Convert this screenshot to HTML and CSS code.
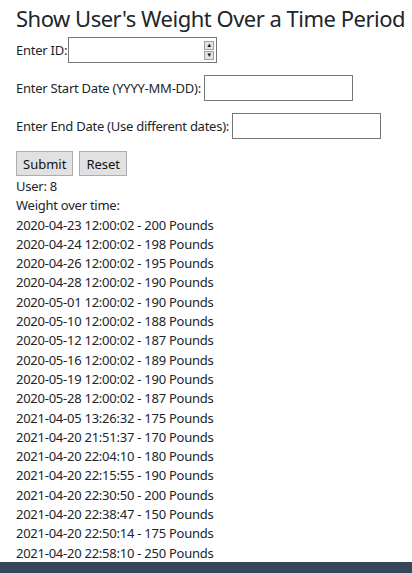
FILE: index.html
```html
<!DOCTYPE html>
<html>
<head>
<meta charset="utf-8">
<link rel="stylesheet" href="styles.css">
</head>
<body>
<div class="page">
  <h1 class="title">Show User's Weight Over a Time Period</h1>
  <form class="form">
    <div class="row row-id"><label>Enter ID:</label><span class="numwrap"><input class="field" type="text"><span class="spin"><span class="spin-btn">&#9650;</span><span class="spin-btn">&#9660;</span></span></span></div>
    <div class="row"><label>Enter Start Date (YYYY-MM-DD):</label><input class="field" type="text"></div>
    <div class="row"><label>Enter End Date (Use different dates):</label><input class="field" type="text"></div>
    <div class="buttons"><button type="button" class="btn">Submit</button><button type="button" class="btn">Reset</button></div>
  </form>
  <div class="results">
    <div>User: 8</div>
    <div>Weight over time:</div>
    <div>2020-04-23 12:00:02 - 200 Pounds</div>
    <div>2020-04-24 12:00:02 - 198 Pounds</div>
    <div>2020-04-26 12:00:02 - 195 Pounds</div>
    <div>2020-04-28 12:00:02 - 190 Pounds</div>
    <div>2020-05-01 12:00:02 - 190 Pounds</div>
    <div>2020-05-10 12:00:02 - 188 Pounds</div>
    <div>2020-05-12 12:00:02 - 187 Pounds</div>
    <div>2020-05-16 12:00:02 - 189 Pounds</div>
    <div>2020-05-19 12:00:02 - 190 Pounds</div>
    <div>2020-05-28 12:00:02 - 187 Pounds</div>
    <div>2021-04-05 13:26:32 - 175 Pounds</div>
    <div>2021-04-20 21:51:37 - 170 Pounds</div>
    <div>2021-04-20 22:04:10 - 180 Pounds</div>
    <div>2021-04-20 22:15:55 - 190 Pounds</div>
    <div>2021-04-20 22:30:50 - 200 Pounds</div>
    <div>2021-04-20 22:38:47 - 150 Pounds</div>
    <div>2021-04-20 22:50:14 - 175 Pounds</div>
    <div>2021-04-20 22:58:10 - 250 Pounds</div>
  </div>
</div>
<div class="footer"></div>
</body>
</html>
```
FILE: styles.css
```css
html, body { margin: 0; padding: 0; }
body {
  font-family: "Noto Sans", "Open Sans", sans-serif;
  font-size: 13px;
  letter-spacing: -0.25px;
  color: #212529;
  background: #fff;
  height: 573px;
  overflow: hidden;
  display: flex;
  flex-direction: column;
}
.page { padding: 0 16px; flex: 1; min-height: 0; overflow: hidden; }
.title {
  font-weight: 400;
  font-size: 22px;
  letter-spacing: -0.5px;
  line-height: 30px;
  white-space: nowrap;
  margin: 3px 0 4px;
}
.form { display: flex; flex-direction: column; }
.row { display: flex; align-items: center; gap: 3px; height: 26px; margin-bottom: 12px; }
.row-id { gap: 1px; }
.row label { line-height: 19px; }
.numwrap { position: relative; display: block; height: 26px; }
.field {
  box-sizing: border-box;
  width: 149px;
  height: 26px;
  border: 1px solid #767676;
  border-radius: 0;
  padding: 0 4px;
  font: inherit;
  background: #fff;
}
.spin {
  position: absolute;
  right: 3px;
  top: 4px;
  width: 10px;
  height: 18px;
  display: flex;
  flex-direction: column;
  gap: 1px;
}
.spin-btn {
  flex: 1;
  background: #e3e3e3;
  border: 1px solid #a0a0a0;
  box-sizing: border-box;
  font-size: 6px;
  line-height: 7px;
  text-align: center;
  color: #111;
  letter-spacing: 0;
}
.buttons { display: flex; gap: 6px; margin-top: 0; }
.btn {
  box-sizing: border-box;
  height: 25px;
  padding: 0 6px;
  background: #e1e1e1;
  border: 1px solid #adadad;
  border-radius: 0;
  font: inherit;
  color: #111;
}
.results { margin-top: 1px; line-height: 19.3px; }
.footer { height: 11px; background: #35475a; flex: none; }
```
